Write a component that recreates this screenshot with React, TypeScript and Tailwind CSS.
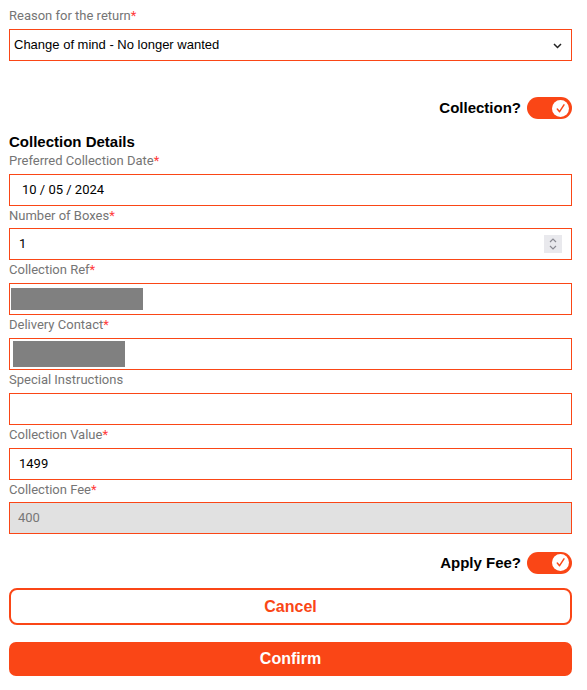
import React from 'react';

const ORANGE = '#fa4616';

function Label({ text, required, tight }: { text: string; required?: boolean; tight?: boolean }) {
    return (
        <div
            className={`${tight ? 'h-[22px]' : 'h-[23px]'} pt-[1px] text-[13px] leading-[18px] text-[#757575] font-['Roboto',sans-serif]`}
        >
            {text}
            {required && <span className="text-[#ff3b3b]">*</span>}
        </div>
    );
}

function Toggle() {
    return (
        <div className="w-[45px] h-[22px] rounded-full bg-[#fa4616] flex items-center justify-end pr-[3px]">
            <div className="w-[17px] h-[17px] rounded-full bg-white flex items-center justify-center">
                <svg width="11" height="11" viewBox="0 0 12 12" fill="none">
                    <path d="M2.5 6.5 L5 9.5 L9.8 2" stroke={ORANGE} strokeWidth="1.6" strokeLinecap="round" strokeLinejoin="round" />
                </svg>
            </div>
        </div>
    );
}

function Field({
    label,
    required,
    value,
    tight,
    children,
    className = '',
}: {
    label: string;
    required?: boolean;
    value?: string;
    tight?: boolean;
    children?: React.ReactNode;
    className?: string;
}) {
    return (
        <div>
            <Label text={label} required={required} tight={tight} />
            <div className={`relative h-[32px] border border-[#fa4616] flex items-center ${className}`}>
                {value !== undefined && (
                    <input
                        readOnly
                        value={value}
                        className="w-full h-full bg-transparent px-[9px] text-[13px] text-black outline-none font-['Roboto',sans-serif]"
                    />
                )}
                {children}
            </div>
        </div>
    );
}

export default function App() {
    return (
        <div className="w-[587px] pl-[9px] pr-[15px] pt-[6px] pb-[14px] bg-white font-['Liberation_Sans',Arial,sans-serif]">
            {/* Reason */}
            <div className="text-[13px] leading-[20px] text-[#757575] font-['Roboto',sans-serif]">
                Reason for the return<span className="text-[#ff3b3b]">*</span>
            </div>
            <div className="mt-[3px] relative h-[32px] border border-[#fa4616] flex items-center">
                <select
                    defaultValue="change"
                    className="appearance-none w-full h-full bg-transparent pl-[4px] text-[13px] text-black outline-none font-['Liberation_Sans',Arial,sans-serif]"
                >
                    <option value="change">Change of mind - No longer wanted</option>
                </select>
                <svg className="absolute right-[9px] top-[13px] pointer-events-none" width="9" height="6" viewBox="0 0 9 6" fill="none">
                    <path d="M1 1 L4.5 4.5 L8 1" stroke="#222" strokeWidth="1.5" />
                </svg>
            </div>

            {/* Collection toggle */}
            <div className="mt-[36px] flex items-center justify-end gap-[6px]">
                <span className="text-[15px] font-bold text-black">Collection?</span>
                <Toggle />
            </div>

            <h2 className="mt-[13px] text-[15px] leading-[18px] font-bold text-black">Collection Details</h2>

            <div className="flex flex-col">
                <Field label="Preferred Collection Date" required>
                    <span className="pl-[12px] text-[13px] text-black font-['Roboto',sans-serif]">10 / 05 / 2024</span>
                </Field>
                <Field label="Number of Boxes" required value="1" tight>
                    <div className="absolute right-[9px] top-[6px] w-[18px] h-[18px] bg-[#e9e9ed] flex flex-col items-center justify-center gap-[2px]">
                        <svg width="8" height="5" viewBox="0 0 8 5" fill="none">
                            <path d="M1 4 L4 1 L7 4" stroke="#8a8a92" strokeWidth="1.2" />
                        </svg>
                        <svg width="8" height="5" viewBox="0 0 8 5" fill="none">
                            <path d="M1 1 L4 4 L7 1" stroke="#8a8a92" strokeWidth="1.2" />
                        </svg>
                    </div>
                </Field>
                <Field label="Collection Ref" required>
                    <div className="ml-[1px] w-[132px] h-[22px] bg-[#808080]" />
                </Field>
                <Field label="Delivery Contact" required>
                    <div className="ml-[3px] w-[112px] h-[26px] bg-[#808080]" />
                </Field>
                <Field label="Special Instructions" value="" />
                <Field label="Collection Value" required value="1499" />
                <Field label="Collection Fee" required tight className="bg-[#e1e1e1]">
                    <span className="pl-[8px] text-[13px] text-[#777] font-['Roboto',sans-serif]">400</span>
                </Field>
            </div>

            {/* Apply fee toggle */}
            <div className="mt-[18px] flex items-center justify-end gap-[6px]">
                <span className="text-[15px] font-bold text-black">Apply Fee?</span>
                <Toggle />
            </div>

            <button className="mt-[14px] w-full h-[37px] rounded-[8px] border-2 border-[#fa4616] bg-white text-[16px] font-bold text-[#fa4616]">
                Cancel
            </button>
            <button className="mt-[17px] w-full h-[34px] rounded-[7px] bg-[#fa4616] text-[16px] font-bold text-white">
                Confirm
            </button>
        </div>
    );
}
